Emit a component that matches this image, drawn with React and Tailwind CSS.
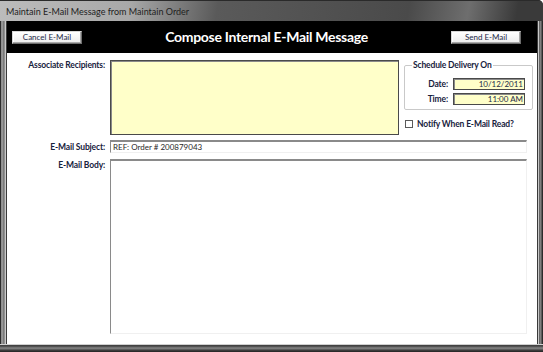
const label = "text-[8.5px] leading-[10px] font-bold text-[#17223d] tracking-[-0.15px]";
const font = { fontFamily: "Lato, 'Liberation Sans', sans-serif" };

function WinButton({ children }) {
  return (
    <button className="w-[70px] h-[13px] flex items-center justify-center border border-t-[#d8d8d8] border-l-[#d8d8d8] border-b-[#6e6e6e] border-r-[#6e6e6e] bg-[linear-gradient(#ffffff,#ececec)] shadow-[inset_-1px_-1px_0_#a8a8a8,inset_1px_1px_0_#ffffff] text-[8px] leading-none text-[#1d2a48]">
      {children}
    </button>
  );
}

export default function App() {
  return (
    <div
      className="w-[543px] h-[352px] flex flex-col bg-[#3e3e3e] overflow-hidden rounded-tr-[5px]"
      style={font}
    >
      {/* title bar */}
      <div className="h-[21px] flex items-center pl-[6px] bg-[linear-gradient(100deg,#bcbcbc_0%,#a8a8a8_24%,#5a5a5a_40%,#4a4a4a_75%,#6e6e6e_86%,#3a3a3a_95%)] border-t border-[#2a2a2a]">
        <span className="text-[9px] leading-none text-[#1e1e1e]">Maintain E-Mail Message from Maintain Order</span>
      </div>

      <div className="flex flex-1">
        <div className="w-[7px] bg-[linear-gradient(to_right,#2c2c2c_0px,#2c2c2c_1px,#8c8c8c_1px,#9a9a9a_3px,#5a5a5a_4px,#c8c8c8_5px,#c8c8c8_6px,#3a3a3a_6px)]" />

        {/* client */}
        <div className="flex-1 flex flex-col bg-white">
          <div className="h-[32px] bg-black flex items-center pl-[5px] pr-[16px]">
            <WinButton>Cancel E-Mail</WinButton>
            <div className="flex-1 text-center text-white font-bold text-[14px] leading-none tracking-[-0.3px]">
              Compose Internal E-Mail Message
            </div>
            <WinButton>Send E-Mail</WinButton>
          </div>

          <div className="flex-1 pt-[7px]">
            {/* recipients row */}
            <div className="flex items-start">
              <div className={`w-[98px] text-right ${label}`}>Associate Recipients:</div>
              <div className="ml-[5px] w-[289px] h-[75px] bg-[#ffffc9] border border-[#4a4a4a] shadow-[inset_1px_1px_0_#8a8a8a]" />
              <div className="ml-[5px] w-[123px] flex flex-col">
                <fieldset className="h-[50px] border border-[#c9c9c9] rounded-[2px] shadow-[inset_1px_1px_0_#fff] pl-[6px] pr-[7px]">
                  <legend className={`${label} px-[1px] ml-[1px]`}>Schedule Delivery On</legend>
                  <div className="flex items-center mt-[8px]">
                    <span className={`w-[37px] text-right ${label}`}>Date:</span>
                    <div className="ml-[5px] w-[72px] h-[12px] bg-[#ffffc9] border border-[#4a4a4a] shadow-[inset_1px_1px_0_#8a8a8a] text-right pr-[1px] text-[8px] leading-[10px] text-[#1d2a48]">
                      10/12/2011
                    </div>
                  </div>
                  <div className="flex items-center mt-[3px]">
                    <span className={`w-[37px] text-right ${label}`}>Time:</span>
                    <div className="ml-[5px] w-[72px] h-[12px] bg-[#ffffc9] border border-[#4a4a4a] shadow-[inset_1px_1px_0_#8a8a8a] text-right pr-[1px] text-[8px] leading-[10px] text-[#1d2a48]">
                      11:00 AM
                    </div>
                  </div>
                </fieldset>
                <div className="flex items-center mt-[9px] ml-[1px]">
                  <div className="w-[8px] h-[8px] border border-[#5a5a5a] bg-white" />
                  <span className={`ml-[4px] ${label}`}>Notify When E-Mail Read?</span>
                </div>
              </div>
            </div>

            {/* subject row */}
            <div className="flex items-center mt-[5px]">
              <div className={`w-[98px] text-right ${label}`}>E-Mail Subject:</div>
              <div className="ml-[5px] w-[417px] h-[13px] flex items-center bg-white border-t-2 border-l border-t-[#8a8a8a] border-l-[#8a8a8a] border-b border-r border-b-[#f0f0f0] border-r-[#f0f0f0] pl-[2px] text-[8px] leading-none text-[#2a2a2a]">
                REF: Order # 200879043
              </div>
            </div>

            {/* body row */}
            <div className="flex items-start mt-[6px]">
              <div className={`w-[98px] text-right pt-[1px] ${label}`}>E-Mail Body:</div>
              <div className="ml-[5px] w-[417px] h-[175px] bg-white border-t-2 border-l border-t-[#8a8a8a] border-l-[#8a8a8a] border-b border-r border-b-[#f0f0f0] border-r-[#f0f0f0]" />
            </div>
          </div>
        </div>

        <div className="w-[6px] bg-[linear-gradient(to_right,#3a3a3a_0px,#3a3a3a_1px,#c8c8c8_1px,#c8c8c8_2px,#5a5a5a_2px,#8c8c8c_4px,#2c2c2c_5px)]" />
      </div>

      <div className="h-[8px] bg-[linear-gradient(to_bottom,#d0d0d0_0px,#d0d0d0_1px,#3a3a3a_1px,#5a5a5a_3px,#8c8c8c_4px,#4a4a4a_6px,#2a2a2a_7px)]" />
    </div>
  );
}
